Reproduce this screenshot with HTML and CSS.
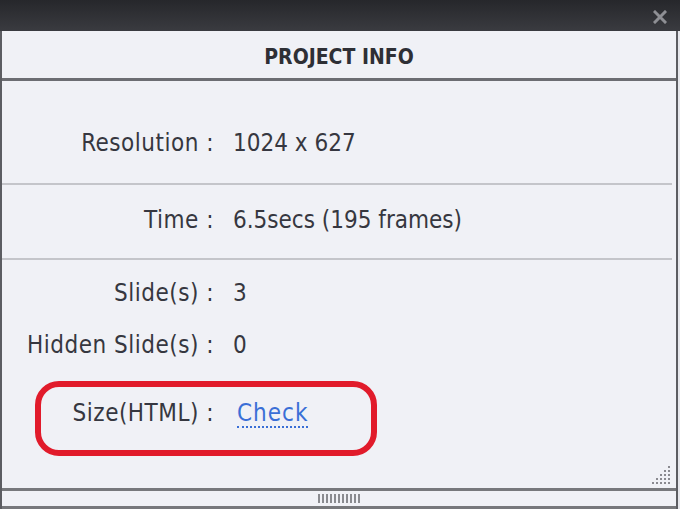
FILE: index.html
```html
<!DOCTYPE html>
<html>
<head>
<meta charset="utf-8">
<link rel="stylesheet" href="styles.css">
</head>
<body>
<div class="window">
  <div class="titlebar">
    <svg class="close" width="14" height="14" viewBox="0 0 14 14"><path d="M2 2 L12 12 M12 2 L2 12" stroke="#8e8f94" stroke-width="3" stroke-linecap="square"/></svg>
  </div>
  <div class="panel">
    <div class="header">PROJECT INFO</div>
    <div class="section s1">
      <div class="row"><span class="label">Resolution :</span><span class="value">1024 x 627</span></div>
    </div>
    <div class="section s2">
      <div class="row"><span class="label">Time :</span><span class="value">6.5secs (195 frames)</span></div>
    </div>
    <div class="section s3">
      <div class="row r3"><span class="label">Slide(s) :</span><span class="value">3</span></div>
      <div class="row r4"><span class="label">Hidden Slide(s) :</span><span class="value">0</span></div>
      <div class="row r5"><span class="label">Size(HTML) :</span><span class="value"><a class="link">Check</a></span>
        <div class="highlight"></div>
      </div>
      <svg class="grip" width="22" height="22" viewBox="0 0 22 22">
        <g fill="#8a8a90">
          <rect x="18" y="2" width="2" height="2"/>
          <rect x="14" y="6" width="2" height="2"/><rect x="18" y="6" width="2" height="2"/>
          <rect x="10" y="10" width="2" height="2"/><rect x="14" y="10" width="2" height="2"/><rect x="18" y="10" width="2" height="2"/>
          <rect x="6" y="14" width="2" height="2"/><rect x="10" y="14" width="2" height="2"/><rect x="14" y="14" width="2" height="2"/><rect x="18" y="14" width="2" height="2"/>
          <rect x="2" y="18" width="2" height="2"/><rect x="6" y="18" width="2" height="2"/><rect x="10" y="18" width="2" height="2"/><rect x="14" y="18" width="2" height="2"/><rect x="18" y="18" width="2" height="2"/>
        </g>
      </svg>
    </div>
    <div class="footer">
      <div class="bars"><i></i><i></i><i></i><i></i><i></i><i></i><i></i><i></i><i></i><i></i><i></i></div>
    </div>
  </div>
</div>
</body>
</html>
```
FILE: styles.css
```css
html, body {
  margin: 0;
  padding: 0;
  background: #e6e7ec;
}
.window {
  width: 680px;
  height: 509px;
  font-family: "DejaVu Sans Condensed", "DejaVu Sans", sans-serif;
  color: #363740;
}
.titlebar {
  height: 31px;
  background: linear-gradient(#26272b, #3a3b40);
  display: flex;
  justify-content: flex-end;
  align-items: flex-start;
  padding-right: 13px;
  box-sizing: border-box;
}
.close {
  margin-top: 10px;
}
.panel {
  width: 678px;
  height: 478px;
  box-sizing: border-box;
  border-left: 2px solid #5c5d62;
  border-right: 2px solid #5c5d62;
  background: #f0f1f6;
  display: flex;
  flex-direction: column;
}
.header {
  height: 50px;
  box-sizing: border-box;
  border-bottom: 3px solid #6c6d72;
  display: flex;
  align-items: center;
  justify-content: center;
  font-weight: bold;
  font-size: 21px;
  color: #2e2f35;
  padding-top: 4px;
}
.section {
  position: relative;
  border-bottom: 2px solid #c4c5ca;
  margin-right: 4px;
  box-sizing: border-box;
}
.s1 { height: 104px; padding-top: 48px; }
.s2 { height: 75px; padding-top: 21px; }
.s3 {
  flex: 1;
  border-bottom: 3px solid #77787c;
  margin-right: 0;
  padding-top: 19px;
}
.row {
  position: relative;
  display: grid;
  grid-template-columns: 212px auto;
  column-gap: 19px;
  font-size: 24px;
  line-height: 28px;
  white-space: nowrap;
}
.label {
  text-align: right;
  letter-spacing: 0.5px;
}
.r4 { margin-top: 24px; }
.r5 { margin-top: 40px; }
.link {
  display: inline-block;
  margin-left: 4px;
  letter-spacing: 1px;
  color: #3a6fd6;
  line-height: 26px;
  border-bottom: 2px dotted #3a6fd6;
}
.highlight {
  position: absolute;
  left: 33px;
  top: -18px;
  width: 342px;
  height: 75px;
  box-sizing: border-box;
  border: 6px solid #e11b2b;
  border-radius: 24px;
}
.grip {
  position: absolute;
  right: 4px;
  bottom: 2px;
}
.footer {
  height: 18px;
  box-sizing: border-box;
  border-bottom: 3px solid #77787c;
  display: flex;
  justify-content: center;
  align-items: center;
}
.bars {
  display: flex;
  gap: 2px;
}
.bars i {
  display: block;
  width: 2px;
  height: 9px;
  background: #8a8b90;
}
```
